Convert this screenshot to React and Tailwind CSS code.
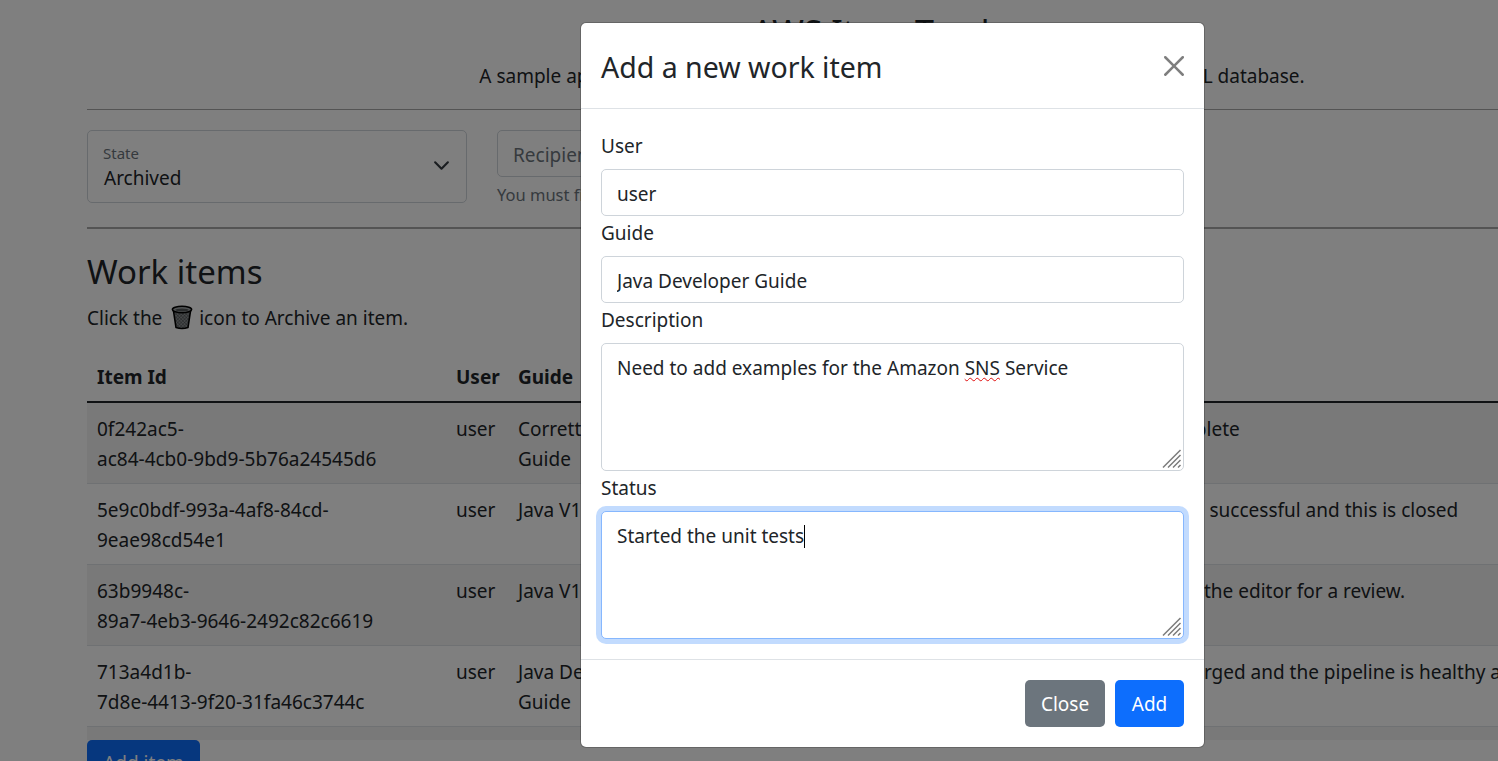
import React from 'react';

const FONT = "font-['Noto_Sans','Open_Sans',sans-serif]";

const rows = [
  { id: ['0f242ac5-', 'ac84-4cb0-9bd9-5b76a24545d6'], guide: 'Corretto Developer Guide', description: 'Update the setup chapter', status: 'Is complete' },
  { id: ['5e9c0bdf-993a-4af8-84cd-', '9eae98cd54e1'], guide: 'Java V1', description: 'Add a new code example', status: 'Change successful and this is closed' },
  { id: ['63b9948c-', '89a7-4eb3-9646-2492c82c6619'], guide: 'Java V1', description: 'Review the S3 topic', status: 'Sent to the editor for a review.' },
  { id: ['713a4d1b-', '7d8e-4413-9f20-31fa46c3744c'], guide: 'Java Developer Guide', description: 'Fix the build', status: 'Doc merged and the pipeline is healthy and stable' },
];

function TrashIcon() {
  return (
    <svg viewBox="0 0 22 25" className="inline-block w-[22px] h-[25px] ml-[4px] mr-[1px] align-[-5px]">
      <defs>
        <pattern id="mesh" width="2.4" height="2.4" patternUnits="userSpaceOnUse" patternTransform="rotate(45)">
          <rect width="2.4" height="2.4" fill="#8c9092" />
          <path d="M0 0H2.4M0 0V2.4" stroke="#35383a" strokeWidth="0.7" />
        </pattern>
      </defs>
      <path d="M2.5 6 L5 22.5 Q11 24.5 17 22.5 L19.5 6 Z" fill="url(#mesh)" stroke="#000" strokeWidth="1.6" />
      <ellipse cx="11" cy="4.5" rx="9.6" ry="3.2" fill="#a4a9ab" stroke="#000" strokeWidth="1.6" />
      <ellipse cx="11" cy="5" rx="6.8" ry="1.5" fill="#55595b" />
    </svg>
  );
}

function ResizeGrip() {
  return (
    <svg viewBox="0 0 20 20" className="absolute right-[2px] bottom-[2px] w-[20px] h-[20px] pointer-events-none">
      <path d="M1 18.5L18.5 1M6 18.5L18.5 6M11 18.5L18.5 11M16 18.5L18.5 16" fill="none" stroke="#7b7b7b" strokeWidth="1.5" />
    </svg>
  );
}

function FieldLabel({ children }) {
  return <label className="block h-[30px] mb-[10px] pt-[2px] leading-[30px]">{children}</label>;
}

function Field({ label, value }) {
  return (
    <>
      <FieldLabel>{label}</FieldLabel>
      <input
        readOnly
        value={value}
        className="block w-full h-[47px] px-[15px] pt-[2px] border border-[#ced4da] rounded-[5px] bg-white text-[#212529] outline-none"
      />
    </>
  );
}

function TextBox({ label, value, focused, children }) {
  return (
    <>
      <FieldLabel>{label}</FieldLabel>
      <div className="relative">
        <textarea
          readOnly
          value={value}
          spellCheck={false}
          className={`block w-full h-[128px] px-[15px] pt-[9px] pb-[6px] rounded-[5px] bg-white text-[#212529] leading-[30px] outline-none resize-none ${
            focused
              ? 'border border-[#86b7fe] shadow-[0_0_0_5px_rgba(13,110,253,0.25)]'
              : 'border border-[#ced4da]'
          }`}
        />
        <div className="absolute top-px left-px px-[15px] pt-[9px] leading-[30px] text-transparent pointer-events-none whitespace-pre">
          {children}
        </div>
        <ResizeGrip />
      </div>
    </>
  );
}

export default function App() {
  return (
    <div className={`relative h-screen overflow-hidden bg-white text-[#212529] text-[19px] leading-[30px] ${FONT}`}>
      {/* Page behind the dialog */}
      <div className="ml-[87px] w-[1610px] pt-[8px]">
        <div className="text-center">
          <h2 className="text-[34px] leading-[48px] mb-[5px]">AWS Item Tracker</h2>
          <p className="mb-[18px]">A sample application that uses the AWS SDK v2 to store the work items in a MySQL database.</p>
        </div>
        <hr className="border-t border-[#a9a9a9]" />

        <div className="flex items-start gap-[30px] mt-[20px]">
          <div className="relative w-[380px] h-[73px] border border-[#ced4da] rounded-[5px] pl-[15px]">
            <div className="text-[15px] leading-[24px] text-[#6c757d] mt-[10px]">State</div>
            <div className="leading-[24px] pl-px mt-px">Archived</div>
            <svg viewBox="0 0 16 16" className="absolute right-[16px] top-[26px] w-[17px] h-[17px]">
              <path fill="none" stroke="#343a40" strokeLinecap="round" strokeLinejoin="round" strokeWidth="2" d="M2 5l6 6 6-6" />
            </svg>
          </div>
          <div className="w-[600px] h-[73px]">
            <div className="h-[47px] border border-[#ced4da] rounded-[5px] px-[15px] leading-[49px] text-[#6c757d]">Recipient's email</div>
            <div className="text-[16.5px] leading-[26px] mt-[5px] text-[#6c757d]">You must fill in a recipient before sending a report.</div>
          </div>
        </div>

        <hr className="mt-[24px] border-t-[2px] border-[#a9a9a9]" />

        <h3 className="text-[33px] leading-[42px] mt-[22px] mb-[10px]">Work items</h3>
        <p className="mb-[18px]">Click the <TrashIcon /> icon to Archive an item.</p>

        <table className="table-fixed w-[1610px] border-collapse text-left">
          <thead>
            <tr className="border-b-[2px] border-[#212529]">
              <th className="w-[359px] px-[10px] pt-[11px] pb-[9px] font-bold">Item Id</th>
              <th className="w-[62px] px-[10px] pt-[11px] pb-[9px] font-bold">User</th>
              <th className="w-[195px] px-[10px] pt-[11px] pb-[9px] font-bold">Guide</th>
              <th className="w-[423px] px-[10px] pt-[11px] pb-[9px] font-bold">Description</th>
              <th className="px-[10px] pt-[11px] pb-[9px] font-bold">Status</th>
            </tr>
          </thead>
          <tbody>
            {rows.map((row, i) => (
              <tr key={row.id[0]} className={`border-b border-[#dee2e6] ${i % 2 === 0 ? 'bg-black/5' : ''}`}>
                <td className="px-[10px] pt-[11px] pb-[9px] align-top">{row.id[0]}<br />{row.id[1]}</td>
                <td className="px-[10px] pt-[11px] pb-[9px] align-top">user</td>
                <td className="px-[10px] pt-[11px] pb-[9px] align-top">{row.guide}</td>
                <td className="px-[10px] pt-[11px] pb-[9px] align-top">{row.description}</td>
                <td className="px-[10px] pt-[11px] pb-[9px] align-top whitespace-nowrap">{row.status}</td>
              </tr>
            ))}
            <tr className="bg-black/5">
              <td colSpan={5} className="h-[13px] p-0" />
            </tr>
          </tbody>
        </table>

        <button type="button" className="block w-[113px] h-[47px] bg-[#0d6efd] text-white rounded-[5px]">Add item</button>
      </div>

      {/* Dialog */}
      <div className="absolute inset-0 bg-black/50">
        <div className="ml-[580px] mt-[22px] w-[625px] bg-white bg-clip-padding border border-black/20 rounded-[6px]">
          <div className="flex items-center justify-between h-[86px] px-[20px] border-b border-[#dee2e6]">
            <h4 className="text-[28.5px] leading-[45px] mt-[4px]">Add a new work item</h4>
            <svg viewBox="0 0 16 16" className="w-[20px] h-[20px] mt-[1px] opacity-50">
              <path d="M.293.293a1 1 0 0 1 1.414 0L8 6.586 14.293.293a1 1 0 1 1 1.414 1.414L9.414 8l6.293 6.293a1 1 0 0 1-1.414 1.414L8 9.414l-6.293 6.293a1 1 0 0 1-1.414-1.414L6.586 8 .293 1.707a1 1 0 0 1 0-1.414z" />
            </svg>
          </div>

          <div className="p-[20px]">
            <Field label="User" value="user" />
            <Field label="Guide" value="Java Developer Guide" />
            <TextBox label="Description" value="Need to add examples for the Amazon SNS Service">
              Need to add examples for the Amazon{' '}
              <span className="underline decoration-wavy decoration-[#e01010] decoration-1 underline-offset-2">SNS</span> Service
            </TextBox>
            <TextBox label="Status" value="Started the unit tests" focused>
              Started the unit tests<span className="inline-block w-px h-[23px] bg-black align-[-5px]" />
            </TextBox>
          </div>

          <div className="flex justify-end gap-[10px] p-[20px] border-t border-[#dee2e6]">
            <button type="button" className="w-[80px] h-[47px] bg-[#6c757d] text-white rounded-[5px]">Close</button>
            <button type="button" className="w-[69px] h-[47px] bg-[#0d6efd] text-white rounded-[5px]">Add</button>
          </div>
        </div>
      </div>
    </div>
  );
}
